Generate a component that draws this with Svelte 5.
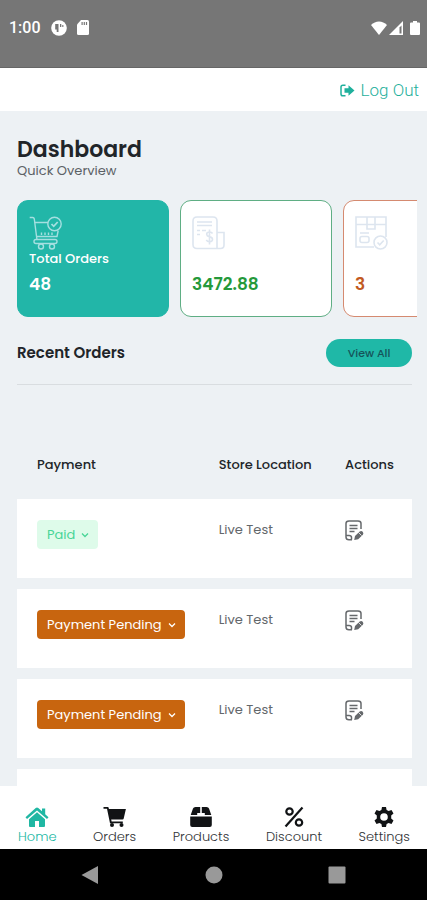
<script>
  const orders = $state([
    { id: 1, status: "Paid", location: "Live Test" },
    { id: 2, status: "Payment Pending", location: "Live Test" },
    { id: 3, status: "Payment Pending", location: "Live Test" },
    { id: 4, status: "Payment Pending", location: "Live Test" },
  ]);

  const tabs = ["Home", "Orders", "Products", "Discount", "Settings"];
  let activeTab = $state("Home");
</script>

<div class="screen">
  <div class="status-bar">
    <span class="clock">1:00</span>
    <svg width="16" height="16" viewBox="0 0 16 16">
      <circle cx="8" cy="8" r="7.800" fill="#fff" />
      <path d="M4.200 4h3.300v8H5.700V9.500H4.200zM9 4h1.300v3H9zM11 5.200h1.500v1.500H11z" fill="#767676" />
    </svg>
    <svg width="12" height="15" viewBox="0 0 12 15">
      <path d="M4 0h6.500Q12 0 12 1.500v12Q12 15 10.500 15h-9Q0 15 0 13.500V4.500z" fill="#fff" />
      <path d="M4.500 2h1.200v3H4.500zM6.700 2h1.200v3H6.700zM8.900 2h1.200v3H8.900z" fill="#767676" />
    </svg>
    <div class="signals">
      <svg width="16" height="14" viewBox="0 0 16 14">
        <path d="M8 14 0 4Q3.500 0.500 8 0.500T16 4z" fill="#fff" />
      </svg>
      <svg width="15" height="14" viewBox="0 0 15 14">
        <path d="M0 14 14 0v14z" fill="#fff" />
        <path d="M10.500 6.500 12.500 4.500v8h-2z" fill="#767676" />
      </svg>
      <svg class="battery" width="10" height="14" viewBox="0 0 10 14">
        <path d="M3 0h4v1.500h2q1 0 1 1V13q0 1-1 1H1q-1 0-1-1V2.500q0-1 1-1h2z" fill="#fff" />
      </svg>
    </div>
  </div>

  <header>
    <a class="logout" href="#logout">
      <svg width="15" height="13" viewBox="0 0 15 13">
        <path d="M5.500 1.200H2.800Q1 1.200 1 3v7q0 1.800 1.800 1.800h2.700" fill="none" stroke="currentColor" stroke-width="1.500" />
        <path d="M4.500 4.300h4V1.300L14.500 6.500l-6 5.200V8.700h-4z" fill="currentColor" />
      </svg>
      Log Out
    </a>
  </header>

  <main>
    <h1>Dashboard</h1>
    <p class="subtitle">Quick Overview</p>

    <div class="cards">
      <div class="card total">
        <svg width="34" height="34" viewBox="0 0 34 34" fill="none" stroke="currentColor" stroke-width="1.400">
          <path d="M0.700 1.500h3q1.300 0 1.600 1.500L8 24M6 6.500h13M8 20.500h20l1.200-6" />
          <circle cx="25.500" cy="8" r="6.700" />
          <path d="m22.500 8 2.200 2.300 4-4.300" stroke-width="1.800" />
          <rect x="5" y="23.500" width="23" height="4" rx="2" />
          <circle cx="12" cy="30.500" r="2.500" />
          <circle cx="23" cy="30.500" r="2.500" />
          <path d="M12.500 16.500v2.500M16 16.500v2.500M19.500 16.500v2.500M23 16.500v2.500" />
        </svg>
        <span class="label">Total Orders</span>
        <strong>48</strong>
      </div>
      <div class="card sales">
        <svg width="34" height="34" viewBox="0 0 34 34" fill="none" stroke="currentColor" stroke-width="1.600">
          <path d="M5 1h16q4 0 4 4v27.500H5q-4 0-4-4V5q0-4 4-4zM25 16.500h7V29q0 3.500-3.500 3.500H24" />
          <path d="M5 6h15M5 9.500h15M5 14.500h3M10 14.500h4M5 18.500h3" />
          <path d="M20.500 17.500q-1-1.800-3.500-1.500-2.500.4-2.300 2.400.2 1.800 2.500 2.200 3.200.5 3.300 2.600.1 2.200-2.700 2.500-2.500.2-3.500-1.800M17.500 13.500v15" />
        </svg>
        <span class="label"></span>
        <strong>3472.88</strong>
      </div>
      <div class="card pending">
        <svg width="34" height="34" viewBox="0 0 34 34" fill="none" stroke="currentColor" stroke-width="1.600">
          <path d="M19 31H1V1h30v20M1 8.500h30M12 1v12h8V1M5 17h9" />
          <rect x="5" y="20.500" width="9" height="6" rx="2" />
          <circle cx="25.500" cy="26.500" r="6.500" />
          <path d="m22.500 26.500 2.200 2.300 4-4.300" />
        </svg>
        <span class="label"></span>
        <strong>3</strong>
      </div>
    </div>

    <div class="section-head">
      <h2>Recent Orders</h2>
      <button class="view-all" type="button">View All</button>
    </div>

    <table>
      <thead>
        <tr>
          <th class="payment">Payment</th>
          <th class="location">Store Location</th>
          <th>Actions</th>
        </tr>
      </thead>
      <tbody>
        {#each orders as order (order.id)}
          <tr>
            <td>
              <div class="status" class:paid={order.status === "Paid"}>
                <select aria-label="Payment status" bind:value={order.status}>
                  <option>Paid</option>
                  <option>Payment Pending</option>
                </select>
                <svg width="8" height="6" viewBox="0 0 8 6">
                  <path d="m1 1.500 3 3 3-3" fill="none" stroke="currentColor" stroke-width="1.300" />
                </svg>
              </div>
            </td>
            <td>{order.location}</td>
            <td>
              <button class="edit" type="button" aria-label="Edit order">
                <svg width="19" height="21" viewBox="0 0 19 21" fill="none" stroke="currentColor" stroke-width="1.500">
                  <path d="M7 19.800H4Q1 19.800 1 17V3.500Q1 1 4 1h9q3 0 3 2.500V9M1 15.500h3q2.500 0 2.500 2v2" />
                  <path d="M4.500 5.500h8M4.500 8.500h8M4.500 11.500h5" />
                  <path d="m9.200 20 .8-4 4.700-4.500q1.700-1.200 3 .2t.2 3L13.200 19.300z" fill="currentColor" stroke="none" />
                  <path d="m13.500 12.500 3 3" stroke="#fff" stroke-width="0.800" />
                </svg>
              </button>
            </td>
          </tr>
        {/each}
      </tbody>
    </table>
  </main>

  <nav class="tabs">
    {#each tabs as tab}
      <a href="#{tab.toLowerCase()}" class:active={tab === activeTab} onclick={() => (activeTab = tab)}>
        <svg width="24" height="22" viewBox="0 0 24 22" fill="currentColor">
          {#if tab === "Home"}
            <path d="M0.500 11.300 10.700 2q1.300-1 2.600 0l3.700 3.300V2.500h3.200V8.300l3.300 3-1.500 1.800L12 4.600 2 13.100z" />
            <path d="m4 13.200 8-6.900 8 6.900V20q0 1-1 1h-5v-6h-4v6H5q-1 0-1-1z" />
          {:else if tab === "Orders"}
            <path d="M0.500 1h4.200q.8 0 1 .8L5.900 3h17l-2.200 9.500q-.2 1-1.200 1H8.200l.4 2h11.200v1.700H7L4 2.800H.500z" />
            <circle cx="9" cy="19" r="2" />
            <circle cx="18.500" cy="19" r="2" />
          {:else if tab === "Products"}
            <path d="M11.200 1H6.500Q4.500 1 4 2.500L1.700 9h6.500V7h3zM12.800 1h4.700q2 0 2.500 1.500L22.300 9h-6.500V7h-3zM1.200 10.500h21.600V19q0 2-2 2H3.200q-2 0-2-2z" />
          {:else if tab === "Discount"}
            <g fill="none" stroke="currentColor" stroke-width="2.200">
              <path d="M20.500 1.500 3.500 20.500" />
              <circle cx="7.500" cy="5.500" r="3.200" />
              <circle cx="17" cy="16.500" r="3.200" />
            </g>
          {:else}
            <path
              fill-rule="evenodd"
              d="M10 1h4l.6 3 2 1.100 2.900-1 2 3.500-2.300 2v2.800l2.300 2-2 3.500-2.900-1-2 1.100-.6 3h-4l-.6-3-2-1.100-2.900 1-2-3.500 2.300-2V9.600l-2.300-2 2-3.500 2.900 1 2-1.100zM12 7.200a3.800 3.800 0 1 0 0 7.600 3.800 3.800 0 0 0 0-7.600z"
            />
          {/if}
        </svg>
        {tab}
      </a>
    {/each}
  </nav>

  <div class="system-nav">
    <button type="button" aria-label="Back">
      <svg width="18" height="18" viewBox="0 0 18 18"><path d="M17 0v18L0.500 9z" fill="#999" /></svg>
    </button>
    <button type="button" aria-label="Home screen">
      <svg width="18" height="18" viewBox="0 0 18 18"><circle cx="9" cy="9" r="8.500" fill="#999" /></svg>
    </button>
    <button type="button" aria-label="Recent apps">
      <svg width="18" height="18" viewBox="0 0 18 18"><rect x="0.500" y="0.500" width="17" height="17" rx="1" fill="#999" /></svg>
    </button>
  </div>
</div>

<style>
  :global(body) {
    margin: 0;
  }

  .screen {
    display: flex;
    flex-direction: column;
    height: 100vh;
    background: #edf1f4;
    color: #212529;
    font-family: Poppins, Inter, sans-serif;
  }

  svg {
    display: block;
    flex: none;
  }

  button {
    padding: 0;
    border: 0;
    background: none;
    font: inherit;
    cursor: pointer;
  }

  a {
    text-decoration: none;
  }

  .status-bar {
    display: flex;
    align-items: center;
    flex: none;
    gap: 10px;
    box-sizing: border-box;
    height: 68px;
    padding: 0 7px 12px 9px;
    border-bottom: 1px solid #666;
    background: #767676;
    color: #fff;
  }

  .clock {
    font: 500 16px/20px Roboto, sans-serif;
  }

  .signals {
    display: flex;
    gap: 2px;
    margin-left: auto;
  }

  .battery {
    margin-left: 4px;
  }

  header {
    display: flex;
    justify-content: flex-end;
    flex: none;
    padding: 10px 8px 9px;
    background: #fff;
  }

  .logout {
    display: flex;
    align-items: center;
    gap: 6px;
    color: #1fb09c;
    font: 300 17px/24px Roboto, sans-serif;
  }

  main {
    flex: 1;
    min-height: 0;
    padding: 26px 15px 0 17px;
    overflow: hidden auto;
    scrollbar-width: none;
  }

  h1 {
    margin: 0;
    font-size: 22px;
    font-weight: 600;
    line-height: 25px;
  }

  .subtitle {
    margin: 0 0 20px;
    color: #5c6166;
    font-size: 13px;
    font-weight: 400;
    line-height: 18px;
  }

  .cards {
    display: flex;
    gap: 11px;
    margin-right: -5px;
    overflow: auto hidden;
    scrollbar-width: none;
  }

  .card {
    display: flex;
    flex: none;
    flex-direction: column;
    box-sizing: border-box;
    width: 152px;
    height: 117px;
    padding: 15px 11px;
    border: 1px solid;
    border-radius: 11px;
    background: #fff;
  }

  .card svg {
    color: #dde5ef;
  }

  .card .label {
    height: 18px;
    font-size: 13px;
    font-weight: 500;
    line-height: 18px;
  }

  .card strong {
    margin-top: 4px;
    font-size: 17px;
    font-weight: 600;
    line-height: 24px;
  }

  .total {
    border-color: #22b6a8;
    background: #22b6a8;
    color: #fff;
  }

  .total svg {
    color: #a5dfe0;
  }

  .sales {
    border-color: #5fae84;
  }

  .sales strong {
    color: #25993a;
  }

  .pending {
    border-color: #d58a70;
  }

  .pending strong {
    color: #c25a22;
  }

  .section-head {
    display: flex;
    align-items: center;
    justify-content: space-between;
    padding: 22px 0 17px;
    border-bottom: 1px solid #d9dde0;
  }

  h2 {
    margin: 0;
    font-size: 15px;
    font-weight: 600;
    line-height: 24px;
  }

  .view-all {
    width: 86px;
    height: 28px;
    border-radius: 14px;
    background: #1fb8a7;
    color: #15545a;
    font-size: 11px;
    font-weight: 500;
  }

  table {
    width: 100%;
    margin-top: 54px;
    border-spacing: 0 11px;
    table-layout: fixed;
    font-size: 13px;
    line-height: 20px;
  }

  th,
  td {
    padding: 0 0 0 20px;
    text-align: left;
  }

  th {
    height: 38px;
    padding-top: 5px;
    box-sizing: border-box;
    font-weight: 500;
    vertical-align: top;
    white-space: nowrap;
  }

  .payment {
    width: 46%;
  }

  .location {
    width: 32%;
  }

  td {
    box-sizing: border-box;
    height: 79px;
    padding-top: 21px;
    background: #fff;
    color: #63676b;
    vertical-align: top;
  }

  /* the chevron shares the select's grid cell */
  .status {
    display: inline-grid;
    align-items: center;
    color: #fff;
  }

  .status select,
  .status svg {
    grid-area: 1 / 1;
  }

  .status svg {
    justify-self: end;
    margin-right: 9px;
    pointer-events: none;
  }

  .status select {
    appearance: none;
    field-sizing: content;
    height: 29px;
    margin: 0;
    padding: 0 23px 0 10px;
    border: 0;
    border-radius: 4px;
    background: #c8650f;
    color: inherit;
    font: inherit;
  }

  .status.paid {
    color: #48d597;
  }

  .status.paid select {
    background: #defbea;
  }

  .edit {
    display: block;
    color: #66696c;
  }

  .tabs {
    display: flex;
    flex: none;
    justify-content: space-between;
    box-sizing: border-box;
    height: 63px;
    padding: 20px 17px 0 18px;
    background: #fff;
  }

  .tabs a {
    display: flex;
    align-items: center;
    flex-direction: column;
    color: #303336;
    font-size: 13px;
    font-weight: 300;
    line-height: 18px;
  }

  .tabs svg {
    color: #111315;
  }

  .tabs .active,
  .tabs .active svg {
    color: #20b7a3;
  }

  .system-nav {
    display: flex;
    align-items: center;
    flex: none;
    justify-content: space-between;
    height: 51px;
    padding: 0 81px;
    background: #000;
  }
</style>
